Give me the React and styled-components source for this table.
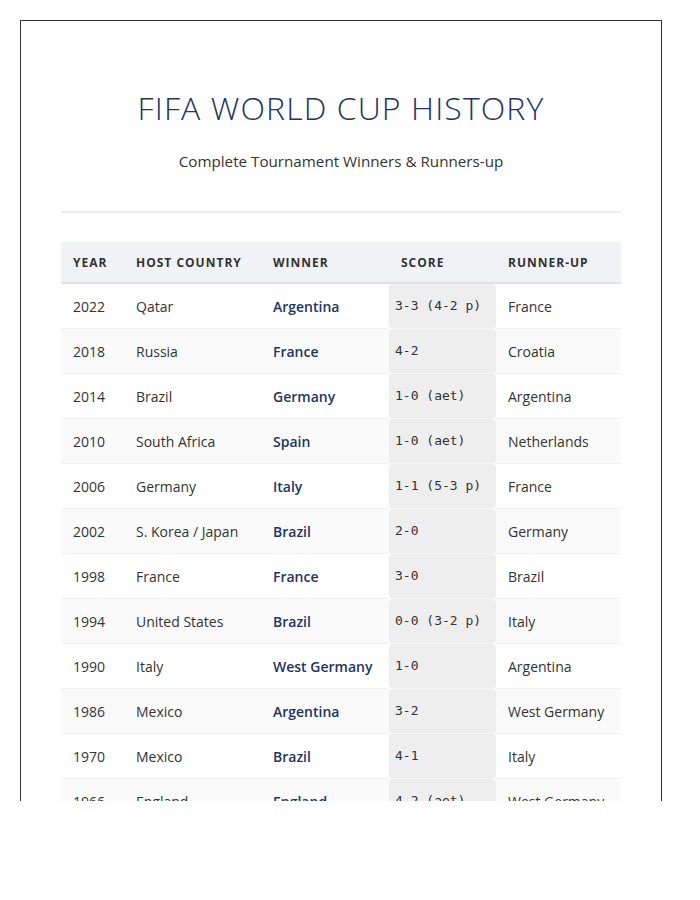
import React from 'react'
import styled, { createGlobalStyle } from 'styled-components'

const GlobalStyle = createGlobalStyle`
  body {
    margin: 0;
    background: #fff;
    font-family: "Open Sans", "Noto Sans", sans-serif;
    color: #333;
  }
`

const Page = styled.div`
  padding: 20px 0 0 20px;
`

const Card = styled.div`
  box-sizing: border-box;
  width: 642px;
  height: 781px;
  overflow: hidden;
  border: 1px solid #333;
  border-bottom: none;
  padding: 0 40px;
`

const Header = styled.header`
  text-align: center;
  padding: 68px 0 40px;
  border-bottom: 2px solid #eee;
  margin-bottom: 29px;
`

const Title = styled.h1`
  margin: 0;
  font-size: 32px;
  font-weight: 300;
  letter-spacing: 1.1px;
  color: #23345f;
  line-height: 38px;
`

const Subtitle = styled.p`
  margin: 24px 0 0;
  font-size: 15.2px;
  color: #333;
`

const Table = styled.table`
  width: 560px;
  border-collapse: separate;
  border-spacing: 0;
  table-layout: fixed;
  font-size: 14px;
`

const Col = styled.col`
  width: ${p => p.$w}px;
`

const Th = styled.th`
  text-align: left;
  background: #f0f2f5;
  height: 40px;
  padding: 0 12px;
  font-size: 12px;
  font-weight: 700;
  letter-spacing: 1px;
  color: #333;
  border-bottom: 2px solid #dfe1e4;
  white-space: nowrap;
`

const Row = styled.tr`
  background: ${p => (p.$alt ? '#fafafa' : '#fff')};
`

const Td = styled.td`
  height: 44px;
  padding: 0 12px;
  border-bottom: 1px solid #f0f0f0;
  color: ${p => (p.$winner ? '#23345f' : '#333')};
  font-weight: ${p => (p.$winner ? 600 : 400)};
  white-space: nowrap;
`

const ScoreTd = styled.td`
  height: 44px;
  padding: 0 6px;
  background: #eee;
  border-radius: 4px;
  border-bottom: 1px solid #f7f7f7;
  font-family: "DejaVu Sans Mono", "Liberation Mono", monospace;
  font-size: 13px;
  color: #333;
  white-space: nowrap;
`

const Score = styled.span`
  position: relative;
  top: -1px;
`

const columns = [
  { label: 'Year', w: 63 },
  { label: 'Host Country', w: 137 },
  { label: 'Winner', w: 128 },
  { label: 'Score', w: 107 },
  { label: 'Runner-up', w: 125 },
]

const results = [
  ['2022', 'Qatar', 'Argentina', '3-3 (4-2 p)', 'France'],
  ['2018', 'Russia', 'France', '4-2', 'Croatia'],
  ['2014', 'Brazil', 'Germany', '1-0 (aet)', 'Argentina'],
  ['2010', 'South Africa', 'Spain', '1-0 (aet)', 'Netherlands'],
  ['2006', 'Germany', 'Italy', '1-1 (5-3 p)', 'France'],
  ['2002', 'S. Korea / Japan', 'Brazil', '2-0', 'Germany'],
  ['1998', 'France', 'France', '3-0', 'Brazil'],
  ['1994', 'United States', 'Brazil', '0-0 (3-2 p)', 'Italy'],
  ['1990', 'Italy', 'West Germany', '1-0', 'Argentina'],
  ['1986', 'Mexico', 'Argentina', '3-2', 'West Germany'],
  ['1970', 'Mexico', 'Brazil', '4-1', 'Italy'],
  ['1966', 'England', 'England', '4-2 (aet)', 'West Germany'],
]

export default function App() {
  return (
    <Page>
      <GlobalStyle />
      <Card>
        <Header>
          <Title>FIFA WORLD CUP HISTORY</Title>
          <Subtitle>Complete Tournament Winners &amp; Runners-up</Subtitle>
        </Header>
        <Table>
          <colgroup>
            {columns.map(c => <Col key={c.label} $w={c.w} />)}
          </colgroup>
          <thead>
            <tr>
              {columns.map(c => (
                <Th key={c.label}>{c.label.toUpperCase()}</Th>
              ))}
            </tr>
          </thead>
          <tbody>
            {results.map(([year, host, winner, score, runnerUp], idx) => (
              <Row key={year} $alt={idx % 2 === 1}>
                <Td>{year}</Td>
                <Td>{host}</Td>
                <Td $winner>{winner}</Td>
                <ScoreTd><Score>{score}</Score></ScoreTd>
                <Td>{runnerUp}</Td>
              </Row>
            ))}
          </tbody>
        </Table>
      </Card>
    </Page>
  )
}
